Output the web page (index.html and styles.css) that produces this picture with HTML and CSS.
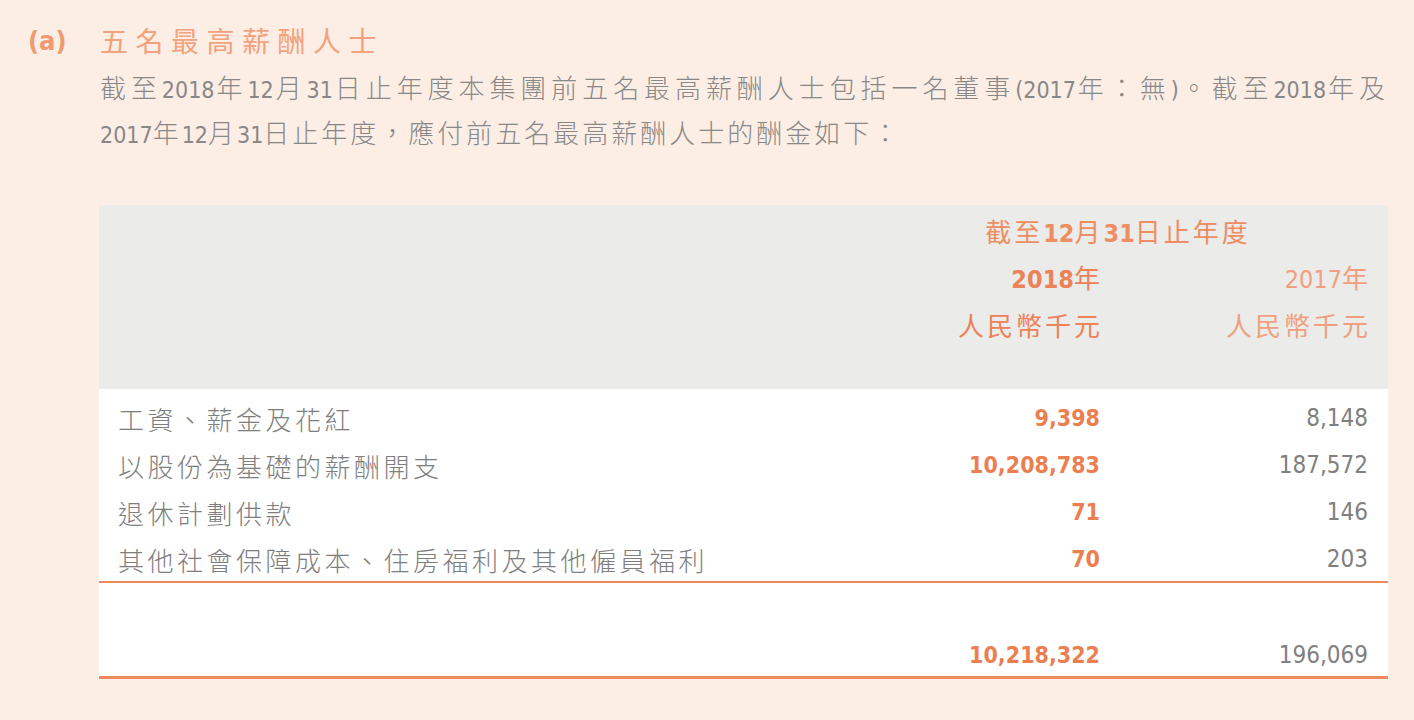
FILE: index.html
```html
<!DOCTYPE html>
<html lang="zh-Hant">
<head>
<meta charset="utf-8">
<title>五名最高薪酬人士</title>
<link rel="stylesheet" href="styles.css">
</head>
<body>
<div class="page">
  <div class="heading">
    <span class="marker">(a)</span>
    <h2 class="title">五名最高薪酬人士</h2>
  </div>
  <p class="intro">截至<span class="n">2018</span>年<span class="n">12</span>月<span class="n">31</span>日止年度本集團前五名最高薪酬人士包括一名董事<span class="n">(2017</span>年：無<span class="n">)</span>。截至<span class="n">2018</span>年及<span class="keep"><span class="n">2017</span>年<span class="n">12</span>月<span class="n">31</span>日</span>止年度，應付前五名最高薪酬人士的酬金如下：</p>

  <table class="comp">
    <colgroup>
      <col class="c-label">
      <col class="c-cur">
      <col class="c-prev">
    </colgroup>
    <thead>
      <tr class="h1">
        <th></th>
        <th colspan="2" class="period">截至<span class="n b">12</span>月<span class="n b">31</span>日止年度</th>
      </tr>
      <tr class="h2">
        <th></th>
        <th class="cur"><span class="n b">2018</span>年</th>
        <th class="prev"><span class="n">2017</span>年</th>
      </tr>
      <tr class="h3">
        <th></th>
        <th class="cur unit">人民幣千元</th>
        <th class="prev unit">人民幣千元</th>
      </tr>
    </thead>
    <tbody>
      <tr class="first">
        <td class="label">工資、薪金及花紅</td>
        <td class="cur n b">9,398</td>
        <td class="prev n">8,148</td>
      </tr>
      <tr>
        <td class="label">以股份為基礎的薪酬開支</td>
        <td class="cur n b">10,208,783</td>
        <td class="prev n">187,572</td>
      </tr>
      <tr>
        <td class="label">退休計劃供款</td>
        <td class="cur n b">71</td>
        <td class="prev n">146</td>
      </tr>
      <tr class="last">
        <td class="label">其他社會保障成本、住房福利及其他僱員福利</td>
        <td class="cur n b">70</td>
        <td class="prev n">203</td>
      </tr>
      <tr class="total">
        <td class="label"></td>
        <td class="cur n b">10,218,322</td>
        <td class="prev n">196,069</td>
      </tr>
    </tbody>
  </table>
</div>
</body>
</html>
```

FILE: styles.css
```css
html, body {
  margin: 0;
  padding: 0;
}

body {
  background: #fdeee5;
  font-family: "Noto Sans CJK TC", "Noto Sans", sans-serif;
  font-weight: 300;
  color: #858585;
}

.page {
  padding: 22px 26px 0 28px;
}

.n {
  font-family: "DejaVu Sans Condensed", "Liberation Sans Narrow", "Noto Sans CJK TC", sans-serif;
  font-weight: 400;
  letter-spacing: 0;
  line-height: 1;
}

.n.b, .b {
  font-weight: 700;
}

.keep {
  white-space: nowrap;
}

.heading {
  display: flex;
  align-items: center;
  height: 36px;
}

.marker {
  width: 72px;
  font-family: "DejaVu Sans Condensed", "Noto Sans", sans-serif;
  font-size: 27px;
  font-weight: 700;
  color: #ef9a70;
}

.title {
  margin: 0;
  font-size: 28px;
  font-weight: 400;
  letter-spacing: 7.5px;
  color: #f2a27c;
  line-height: 36px;
}

.intro {
  margin: 6px 0 0 72px;
  font-size: 26px;
  line-height: 45px;
  letter-spacing: 3px;
  text-align: justify;
  color: #888;
}

.intro .n {
  font-size: 23px;
}

.comp {
  margin: 51px 0 0 71px;
  width: 1289px;
  border-collapse: collapse;
  border-spacing: 0;
  table-layout: fixed;
}

.c-cur { width: 252px; }
.c-prev { width: 268px; }

.comp th, .comp td {
  padding: 0 20px 0 0;
  font-weight: 300;
  white-space: nowrap;
}

.comp thead th {
  background: #ebebea;
  color: #ee8d62;
  font-size: 26px;
  line-height: 46px;
  letter-spacing: 3px;
  font-weight: 400;
}

.comp thead th.cur, .comp thead th.prev {
  padding-right: 17px;
}

.comp thead .n {
  font-size: 25px;
  letter-spacing: 0;
}

.comp .h1 th { padding-top: 3px; }
.comp .h3 th { padding-top: 2px; padding-bottom: 41px; }

.period {
  text-align: center;
}

.cur { text-align: right; }
.prev { text-align: right; }

.comp thead .cur { color: #ec8258; }
.comp thead .prev { color: #f0a07e; }

.comp tbody td {
  background: #fff;
  line-height: 47px;
  font-size: 24px;
}

.comp tbody td.cur {
  font-size: 23px;
}

.comp tbody .label {
  padding-left: 19px;
  font-size: 26px;
  letter-spacing: 3.5px;
  color: #7e7e7e;
}

.comp tbody .cur {
  color: #ec7f52;
  font-weight: 700;
}

.comp tbody .prev {
  color: #808080;
}

.comp tbody .first td { padding-top: 6px; }

.comp tbody .last td {
  padding-top: 2px;
  line-height: 43px;
  border-bottom: 2px solid #ee8a60;
}

.comp tbody .total td {
  padding-top: 52px;
  line-height: 41px;
  border-bottom: 3px solid #ee8a60;
}
```
